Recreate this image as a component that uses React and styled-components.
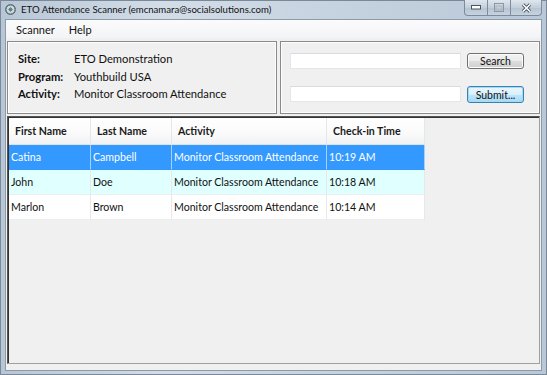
import React from 'react';
import styled, { createGlobalStyle } from 'styled-components';

const Global = createGlobalStyle`
  html, body { margin: 0; padding: 0; background: #fff; }
  body { font-family: Lato, "Open Sans", sans-serif; }
`;

const Window = styled.div`
  width: 547px;
  height: 375px;
  box-sizing: border-box;
  display: flex;
  flex-direction: column;
  padding: 0 5px 4px 5px;
  background: linear-gradient(90deg, #b7c6d6 0%, #d3dde8 30%, #c6d3e0 60%, #b9c8d8 100%);
  box-shadow: inset 0 0 0 1px #7b8896;
`;

const TitleBar = styled.div`
  height: 19px;
  display: flex;
  align-items: center;
  gap: 5px;
  position: relative;
`;

const AppIcon = styled.span`
  width: 11px;
  height: 11px;
  border-radius: 50%;
  background: radial-gradient(circle, #4f8f88 0 30%, #cfd6da 35% 60%, #7d8c94 65%);
  border: 1px solid #5d6a72;
  box-sizing: border-box;
`;

const Title = styled.span`
  font-size: 9.6px;
  color: #111;
  white-space: nowrap;
`;

const Caption = styled.div`
  position: absolute;
  top: 0;
  right: 0;
  display: flex;
`;

const CapButton = styled.span`
  width: ${p => p.$w}px;
  height: 16px;
  box-sizing: border-box;
  display: flex;
  align-items: center;
  justify-content: center;
  border: 1px solid #7d8b9a;
  border-top: none;
  border-left-width: ${p => (p.$first ? 1 : 0)}px;
  border-radius: ${p => p.$radius};
  background: linear-gradient(#dfe6ee, #c3cfdb 50%, #b5c3d1 51%, #c7d3df);
`;

const Client = styled.div`
  flex: 1;
  display: flex;
  flex-direction: column;
  background: #f0f0f0;
  border: 1px solid #8d9aa8;
`;

const MenuBar = styled.div`
  height: 18px;
  display: flex;
  align-items: center;
  padding-left: 3px;
  background: linear-gradient(#fbfbfc, #f3f4f6);
`;

const MenuItem = styled.span`
  font-size: 11px;
  color: #111;
  padding: 0 7px;
`;

const TopRow = styled.div`
  display: flex;
  gap: 3px;
  padding: 3px 1px 0 1px;
`;

const Group = styled.div`
  box-sizing: border-box;
  width: ${p => p.$w}px;
  height: 73px;
  border: 1px solid #8a8a8a;
  box-shadow: inset 0 0 0 1px #fdfdfd;
  display: flex;
`;

const InfoGrid = styled.div`
  display: grid;
  grid-template-columns: 56px auto;
  grid-auto-rows: 17.5px;
  align-content: start;
  align-items: center;
  padding: 8px 0 0 10px;
  font-size: 11.2px;
  color: #111;
  white-space: nowrap;
`;

const Label = styled.span`
  font-weight: 700;
`;

const Form = styled.div`
  display: grid;
  grid-template-columns: 171px 57px;
  grid-template-rows: 16px 17px;
  align-content: start;
  column-gap: 6px;
  row-gap: 17px;
  padding: 11px 0 0 9px;
`;

const Field = styled.input`
  box-sizing: border-box;
  height: 16px;
  border: 1px solid #e3e6ea;
  border-top-color: #d8dce1;
  background: #fff;
  outline: none;
`;

const Btn = styled.button`
  box-sizing: border-box;
  height: ${p => (p.$focus ? 17 : 16)}px;
  padding: 0;
  font-family: inherit;
  font-size: 10.5px;
  color: #111;
  border-radius: 3px;
  border: 1px solid ${p => (p.$focus ? '#3c7fb1' : '#707070')};
  background: ${p =>
    p.$focus
      ? 'linear-gradient(#eaf6fd, #d9f0fc 50%, #bee6fd 51%, #a7d9f5)'
      : 'linear-gradient(#f2f2f2, #ebebeb 50%, #dddddd 51%, #cfcfcf)'};
  box-shadow: inset 0 0 0 1px ${p => (p.$focus ? '#9fdcf8' : '#fcfcfc')};
`;

const GridBox = styled.div`
  flex: 1;
  margin: 2px 1px 6px 1px;
  border: 1px solid #a0a0a0;
  border-top-color: #555;
  border-left-color: #555;
  box-shadow: inset 1px 1px 0 #333;
  padding: 1px 0 0 1px;
  background: #f0f0f0;
`;

const Table = styled.div`
  display: grid;
  grid-template-columns: 82px 81px 155px 98px;
  width: 416px;
  font-size: 10.6px;
  white-space: nowrap;
`;

const HeadCell = styled.div`
  height: 27px;
  box-sizing: border-box;
  display: flex;
  align-items: center;
  padding-left: 6px;
  font-weight: 700;
  color: #1a1a1a;
  background: linear-gradient(#ffffff, #fafafa 60%, #f1f2f4);
  border-right: 1px solid #e4e6ea;
  border-bottom: 1px solid #dfe2e6;
`;

const rowBg = { sel: '#3399ff', alt: '#e0ffff', plain: '#ffffff' };

const Cell = styled.div`
  height: 25px;
  box-sizing: border-box;
  display: flex;
  align-items: center;
  padding-left: 2px;
  overflow: hidden;
  color: ${p => (p.$kind === 'sel' ? '#fff' : '#111')};
  background: ${p => rowBg[p.$kind]};
  border-right: 1px solid ${p => (p.$kind === 'sel' ? '#a8d0fb' : '#e6e8ea')};
  border-bottom: 1px solid ${p => (p.$kind === 'sel' ? '#3399ff' : '#eceeef')};
`;

const columns = ['First Name', 'Last Name', 'Activity', 'Check-in Time'];

const rows = [
  { kind: 'sel', data: ['Catina', 'Campbell', 'Monitor Classroom Attendance', '10:19 AM'] },
  { kind: 'alt', data: ['John', 'Doe', 'Monitor Classroom Attendance', '10:18 AM'] },
  { kind: 'plain', data: ['Marlon', 'Brown', 'Monitor Classroom Attendance', '10:14 AM'] },
];

const info = [
  ['Site:', 'ETO Demonstration'],
  ['Program:', 'Youthbuild USA'],
  ['Activity:', 'Monitor Classroom Attendance'],
];

export default function App() {
  return (
    <>
      <Global />
      <Window>
        <TitleBar>
          <AppIcon />
          <Title>ETO Attendance Scanner (emcnamara@socialsolutions.com)</Title>
          <Caption>
            <CapButton $w={24} $first $radius="0 0 0 4px">
              <svg width="10" height="5"><rect x="0.5" y="0.5" width="9" height="3.5" fill="#fff" stroke="#4a5560" /></svg>
            </CapButton>
            <CapButton $w={23} $radius="0">
              <svg width="10" height="9"><rect x="0.5" y="0.5" width="9" height="8" fill="none" stroke="#8d98a4" /><rect x="2" y="3" width="6" height="4" fill="none" stroke="#a9b3bd" /></svg>
            </CapButton>
            <CapButton $w={31} $radius="0 0 4px 0">
              <svg width="11" height="10" viewBox="0 0 11 10">
                <path d="M2 1.5 L9 8.5 M9 1.5 L2 8.5" stroke="#4a5560" strokeWidth="3.2" />
                <path d="M2 1.5 L9 8.5 M9 1.5 L2 8.5" stroke="#fff" strokeWidth="1.6" />
              </svg>
            </CapButton>
          </Caption>
        </TitleBar>
        <Client>
          <MenuBar>
            <MenuItem>Scanner</MenuItem>
            <MenuItem>Help</MenuItem>
          </MenuBar>
          <TopRow>
            <Group $w={270}>
              <InfoGrid>
                {info.map(([k, v]) => (
                  <React.Fragment key={k}>
                    <Label>{k}</Label>
                    <span>{v}</span>
                  </React.Fragment>
                ))}
              </InfoGrid>
            </Group>
            <Group $w={260}>
              <Form>
                <Field />
                <Btn>Search</Btn>
                <Field />
                <Btn $focus>Submit...</Btn>
              </Form>
            </Group>
          </TopRow>
          <GridBox>
            <Table>
              {columns.map(c => (
                <HeadCell key={c}>{c}</HeadCell>
              ))}
              {rows.map((r, i) =>
                r.data.map((d, j) => (
                  <Cell key={`${i}-${j}`} $kind={r.kind}>
                    {d}
                  </Cell>
                ))
              )}
            </Table>
          </GridBox>
        </Client>
      </Window>
    </>
  );
}
